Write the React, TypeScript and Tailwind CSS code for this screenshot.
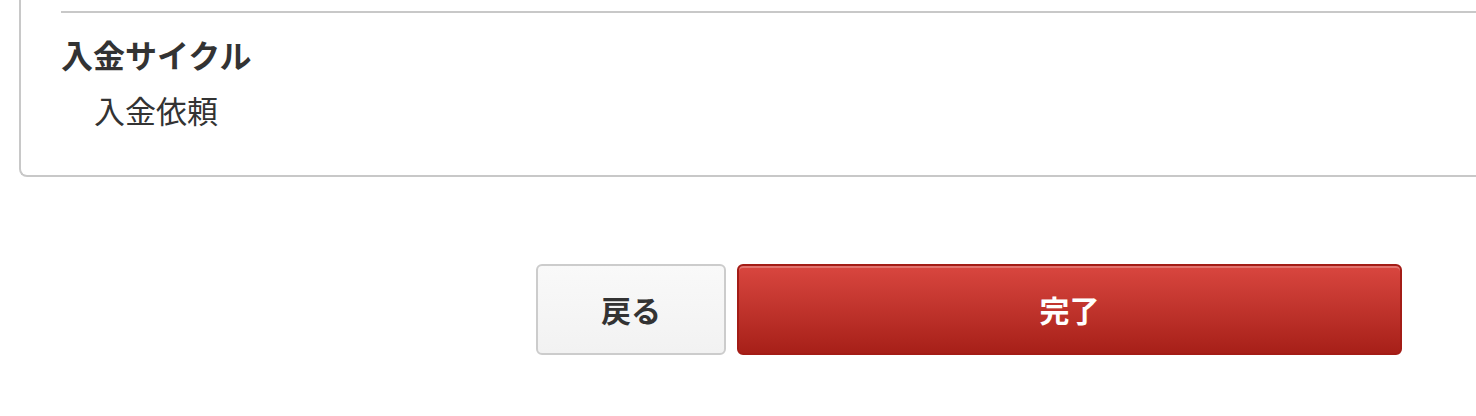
export default function App() {
  const font = { fontFamily: '"Noto Sans CJK JP", "Noto Sans", sans-serif' };
  return (
    <div className="w-[1476px] h-[416px] overflow-hidden bg-white text-[#333]" style={font}>
      <div className="ml-[19px] border-l-2 border-b-2 border-[#c8c8c8] rounded-bl-[8px] pt-[11px] pb-[45px]">
        <div className="ml-[40px] h-[2px] bg-[#c8c8c8]" />
        <div className="ml-[40px] mt-[21px] text-[32px] leading-[40px] font-bold">入金サイクル</div>
        <div className="ml-[73px] mt-[16px] text-[31px] leading-[40px]">入金依頼</div>
      </div>
      <div className="flex justify-end gap-[11px] pr-[74px] mt-[87px]">
        <button className="w-[190px] h-[91px] rounded-[6px] border-2 border-[#cccccc] bg-gradient-to-b from-[#f9f9f9] to-[#f2f2f2] text-[30px] font-bold text-[#333]">
          戻る
        </button>
        <button className="w-[665px] h-[91px] rounded-[6px] border-2 border-[#a31c16] bg-gradient-to-b from-[#d9463f] to-[#a71f18] text-[30px] font-bold text-white shadow-[inset_0_2px_0_rgba(255,255,255,0.25)]">
          完了
        </button>
      </div>
    </div>
  );
}
